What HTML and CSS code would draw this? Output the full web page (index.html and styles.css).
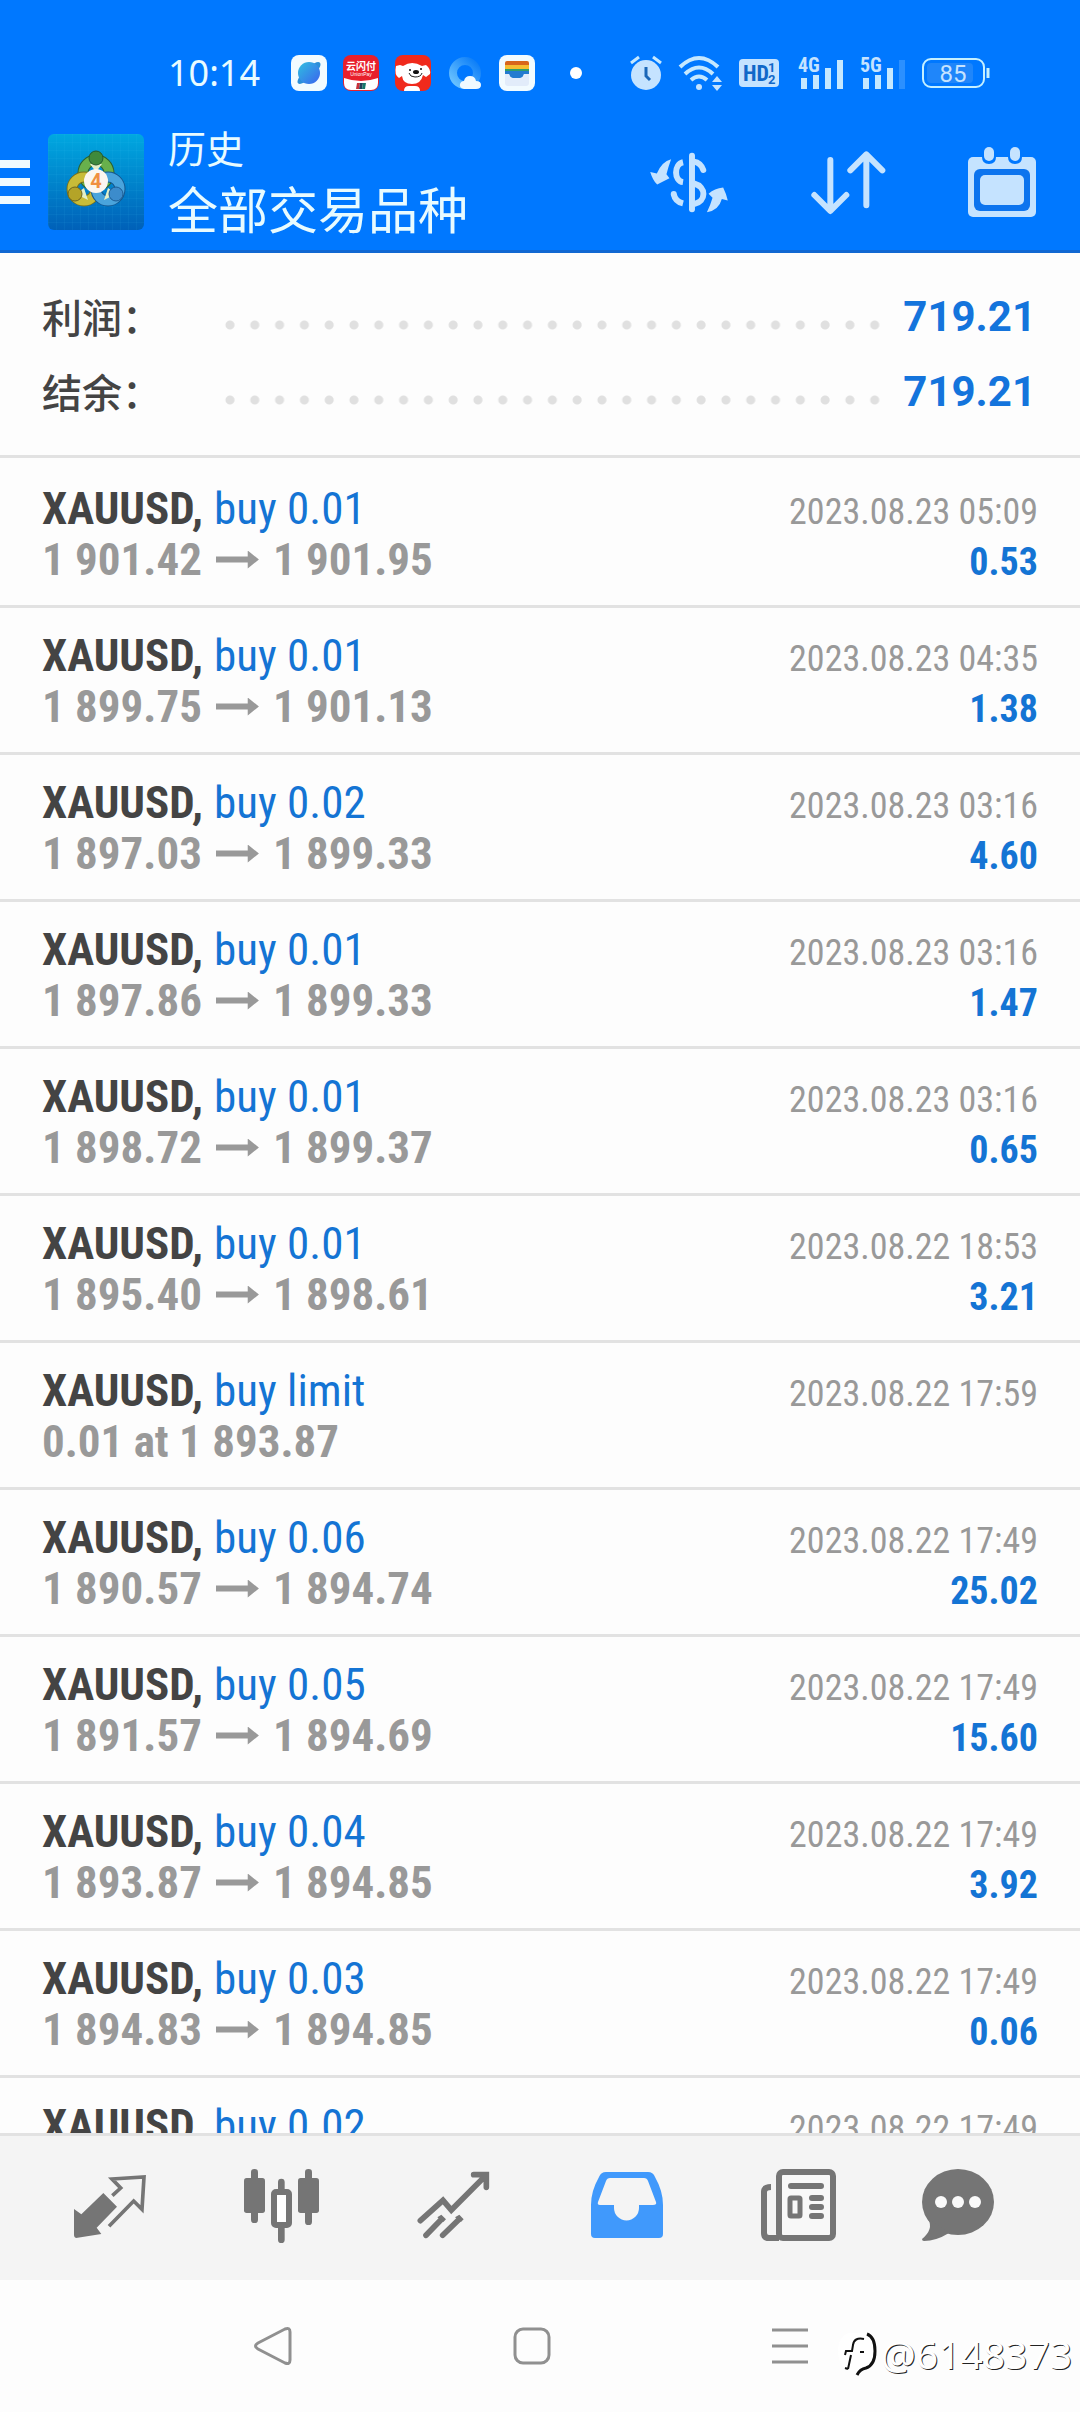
FILE: index.html
```
<!DOCTYPE html>
<html lang="zh-CN">

<head>
    <meta charset="UTF-8">
    <meta name="viewport" content="width=device-width, initial-scale=1.0">
    <title>历史</title>
    <link rel="stylesheet" href="styles.css">
</head>

<body>
    <header class="header">
        <!-- 状态栏 -->
        <div class="status">
            <span class="time">10:14</span>
            <div class="apps">
                <svg viewBox="0 0 36 36">
                    <defs>
                        <linearGradient id="planet" x1="0" y1="0" x2="1" y2="1">
                            <stop offset="0" stop-color="#2fc0e0" />
                            <stop offset="1" stop-color="#3b63ee" />
                        </linearGradient>
                    </defs>
                    <rect width="36" height="36" rx="8" fill="#f2fbff" />
                    <ellipse cx="18" cy="18" rx="15" ry="5" transform="rotate(-43 18 18)" fill="#2b8fd8" />
                    <circle cx="18" cy="18" r="11" fill="url(#planet)" />
                </svg>
                <svg viewBox="0 0 36 36">
                    <rect width="36" height="36" rx="8" fill="#e8202c" />
                    <path d="M1 23q17 6 34 0v5q0 7-7 7H8q-7 0-7-7z" fill="#fff" />
                    <text x="18" y="15" text-anchor="middle" class="pay-cn">云闪付</text>
                    <text x="18" y="21" text-anchor="middle" class="pay-en">UnionPay</text>
                    <path d="M14 28h3l-1 6h-3z" fill="#c8313a" />
                    <path d="M17 28h3l-1 6h-3z" fill="#21405a" />
                    <path d="M20 28h3l-1 6h-3z" fill="#147a6c" />
                </svg>
                <svg viewBox="0 0 36 36">
                    <rect width="36" height="36" rx="8" fill="#f02a1c" />
                    <path d="M8 11q9-6 19 0l4-1q5 4 4 9l-4 3-3-2q-2 9-11 9T7 21l-3 2Q-1 20 1 11l4-1z" fill="#fff" />
                    <path d="M9 36q0-5 5-5h6q5 0 5 5z" fill="#fff" />
                    <path d="M14 18q1 4 6 4 6 0 7-4" fill="none" stroke="#222" />
                    <ellipse cx="21" cy="17" rx="3" ry="2" fill="#111" />
                    <circle cx="15" cy="15" r="1" fill="#111" />
                    <circle cx="26" cy="14" r="1" fill="#111" />
                </svg>
                <svg viewBox="0 0 36 36">
                    <defs>
                        <linearGradient id="ring" x1="1" y1="0" x2="0" y2="1">
                            <stop offset="0" stop-color="#0a7cf8" />
                            <stop offset="1" stop-color="#6cc4ff" />
                        </linearGradient>
                    </defs>
                    <circle cx="18" cy="18" r="12" fill="none" stroke="url(#ring)" stroke-width="8" />
                    <path d="M17 34q-5-1-4-5 1-3 4-3 1-5 6-5t6 5q5 0 5 4t-5 4z" fill="#f0faff" />
                </svg>
                <svg viewBox="0 0 36 36">
                    <rect width="36" height="36" rx="8" fill="#f2fbff" />
                    <path d="M6 8q0-2 2-2h20q2 0 2 2v2H6z" fill="#d8651c" />
                    <path d="M6 10h24v4H6z" fill="#f6bd32" />
                    <path d="M6 14h24v3H6z" fill="#2f9e6c" />
                    <path d="M6 16h24v3h-5q-1 4-4 4h-7q-3 0-4-4H6z" fill="#237bd0" />
                    <path d="M6 19h4q1 4 4 4h7q3 0 4-4h5v9q0 3-3 3H9q-3 0-3-3z" fill="#e2ecfa" />
                </svg>
            </div>
            <i class="dot"></i>
            <div class="system">
                <svg class="alarm" viewBox="0 0 34 36">
                    <circle cx="17" cy="20" r="15" />
                    <path d="M2 8l8-6M32 8l-8-6" class="line3" />
                    <path d="M17 12v9l4 4" fill="none" stroke="#1b67b8" stroke-width="3" />
                </svg>
                <svg class="wifi" viewBox="0 0 44 36">
                    <g fill="none" stroke="#c5e8ff" stroke-width="4">
                        <path d="M1 12q19-18 38 0" />
                        <path d="M6 19q14-13 28 0" />
                        <path d="M12 25q8-7 16 0" />
                    </g>
                    <circle cx="20" cy="32" r="3" />
                    <path d="M33 27l5-6 5 6zM33 30h10l-5 6z" />
                </svg>
                <svg class="hd" viewBox="0 0 40 28">
                    <rect width="40" height="28" rx="4" />
                    <text x="4" y="22" class="hd-big">HD</text>
                    <text x="29" y="13" class="hd-small">1</text>
                    <text x="29" y="25" class="hd-small">2</text>
                </svg>
                <svg class="signal" viewBox="0 0 46 34">
                    <text x="0" y="16" class="net">4G</text>
                    <path d="M6 33V22M18 33V19M30 33V12M42 33V4" class="bar" />
                </svg>
                <svg class="signal" viewBox="0 0 46 34">
                    <text x="0" y="16" class="net">5G</text>
                    <path d="M6 33V22M18 33V19M30 33V12" class="bar" />
                    <path d="M42 33V4" class="bar off" />
                </svg>
                <svg class="battery" viewBox="0 0 68 30">
                    <rect x="1" y="1" width="61" height="28" rx="8" fill="none" stroke="#c5f0ff" stroke-width="2" />
                    <rect x="5" y="5" width="46" height="20" rx="4" fill="#1f86fa" />
                    <path d="M66 10v10" stroke="#c5f0ff" stroke-width="3" />
                    <text x="31" y="24" text-anchor="middle" class="level">85</text>
                </svg>
            </div>
        </div>

        <!-- 标题栏 -->
        <div class="bar-top">
            <button class="menu" aria-label="菜单"><i></i><i></i><i></i></button>
            <svg class="logo" viewBox="0 0 96 96">
                <defs>
                    <linearGradient id="tile" x1="0" y1="0" x2="0" y2="1">
                        <stop offset="0" stop-color="#00a8e0" />
                        <stop offset="1" stop-color="#0060b8" />
                    </linearGradient>
                    <pattern id="mesh" width="8" height="8" patternUnits="userSpaceOnUse">
                        <path d="M8 0H0v8" fill="none" stroke="#3cc8f0" stroke-opacity=".15" />
                    </pattern>
                </defs>
                <rect width="96" height="96" rx="6" fill="url(#tile)" />
                <rect width="96" height="96" rx="6" fill="url(#mesh)" />
                <g fill="none" stroke-width="9">
                    <circle cx="48" cy="39" r="13" stroke="#2c6030" stroke-width="11" />
                    <circle cx="48" cy="39" r="13" stroke="#68b04c" />
                    <circle cx="36" cy="55" r="12" stroke="#76701c" stroke-width="11" />
                    <circle cx="36" cy="55" r="12" stroke="#c8bc38" />
                    <circle cx="60" cy="55" r="12" stroke="#14568e" stroke-width="11" />
                    <circle cx="60" cy="55" r="12" stroke="#4aa4dc" />
                </g>
                <path d="M42 30h12l-6 8zM28 60l8-6 4 12zM68 60l-8-6-4 12z" fill="#e4f0c8" />
                <circle cx="48" cy="24" r="7" fill="#3f8a3c" stroke="#25592c" />
                <circle cx="27" cy="60" r="7" fill="#b4a428" stroke="#6c6420" />
                <circle cx="68" cy="60" r="7" fill="#3c8ccc" stroke="#1c5c94" />
                <circle cx="48" cy="47" r="12" fill="#fbf6f0" />
                <text x="48" y="54" text-anchor="middle" class="four">4</text>
            </svg>
            <div class="titles">
                <p class="sub">历史</p>
                <h1>全部交易品种</h1>
            </div>
            <button class="act" aria-label="交易品种">
                <svg class="sync" viewBox="30 28 240 184">
                    <g fill="none" stroke="#c5e3ff" stroke-width="18">
                        <path d="M132 59c-28 6-28 56 0 60M104 155q4 22 28 28" />
                        <path d="M165 57q20 3 28 25" stroke-linecap="round" />
                        <path d="M165 123c38 10 38 54 0 62" />
                        <path d="M159 39v162" stroke-linecap="round" />
                    </g>
                    <circle cx="104" cy="155" r="9" />
                    <path d="M96 50q-8 22-14 45l9 12-37 19q-13-12-21-38l20 5q15-36 43-43z" />
                    <path d="M204 210q10-20 17-44l-12-12q18-17 44-19 9 18 14 39l-18-4q-9 34-45 40z" />
                </svg>
            </button>
            <button class="act" aria-label="排序">
                <svg class="sort" viewBox="506 26 225 195">
                    <g fill="none" stroke="#c5e3ff" stroke-width="18" stroke-linecap="round" stroke-linejoin="round">
                        <path d="M564 56v152M516 161l48 48 48-48" />
                        <path d="M672 192V40M624 87l48-48 48 48" />
                    </g>
                </svg>
            </button>
            <button class="act" aria-label="日期">
                <svg class="calendar" viewBox="0 0 68 70">
                    <rect y="10" width="68" height="60" rx="5" />
                    <path d="M14 0v10q0 7 7 7t7-7V0zM40 0v10q0 7 7 7t7-7V0z" fill="#0078ff" />
                    <rect x="16" width="10" height="14" rx="5" />
                    <rect x="42" width="10" height="14" rx="5" />
                    <rect x="6" y="22" width="56" height="42" rx="6" fill="#0d74ee" />
                    <rect x="12" y="28" width="44" height="30" rx="5" />
                </svg>
            </button>
        </div>
    </header>

    <main class="main">
        <!-- 汇总 -->
        <dl class="total">
            <div><dt>利润：</dt><dd>719.21</dd></div>
            <div><dt>结余：</dt><dd>719.21</dd></div>
        </dl>

        <!-- 成交记录 -->
        <ul class="list">
            <li>
                <p><b>XAUUSD,</b> <span class="type">buy 0.01</span><time>2023.08.23 05:09</time></p>
                <p class="price">1 901.42 <i class="to"></i> 1 901.95<span class="profit">0.53</span></p>
            </li>
            <li>
                <p><b>XAUUSD,</b> <span class="type">buy 0.01</span><time>2023.08.23 04:35</time></p>
                <p class="price">1 899.75 <i class="to"></i> 1 901.13<span class="profit">1.38</span></p>
            </li>
            <li>
                <p><b>XAUUSD,</b> <span class="type">buy 0.02</span><time>2023.08.23 03:16</time></p>
                <p class="price">1 897.03 <i class="to"></i> 1 899.33<span class="profit">4.60</span></p>
            </li>
            <li>
                <p><b>XAUUSD,</b> <span class="type">buy 0.01</span><time>2023.08.23 03:16</time></p>
                <p class="price">1 897.86 <i class="to"></i> 1 899.33<span class="profit">1.47</span></p>
            </li>
            <li>
                <p><b>XAUUSD,</b> <span class="type">buy 0.01</span><time>2023.08.23 03:16</time></p>
                <p class="price">1 898.72 <i class="to"></i> 1 899.37<span class="profit">0.65</span></p>
            </li>
            <li>
                <p><b>XAUUSD,</b> <span class="type">buy 0.01</span><time>2023.08.22 18:53</time></p>
                <p class="price">1 895.40 <i class="to"></i> 1 898.61<span class="profit">3.21</span></p>
            </li>
            <li>
                <p><b>XAUUSD,</b> <span class="type">buy limit</span><time>2023.08.22 17:59</time></p>
                <p class="price">0.01 at 1 893.87</p>
            </li>
            <li>
                <p><b>XAUUSD,</b> <span class="type">buy 0.06</span><time>2023.08.22 17:49</time></p>
                <p class="price">1 890.57 <i class="to"></i> 1 894.74<span class="profit">25.02</span></p>
            </li>
            <li>
                <p><b>XAUUSD,</b> <span class="type">buy 0.05</span><time>2023.08.22 17:49</time></p>
                <p class="price">1 891.57 <i class="to"></i> 1 894.69<span class="profit">15.60</span></p>
            </li>
            <li>
                <p><b>XAUUSD,</b> <span class="type">buy 0.04</span><time>2023.08.22 17:49</time></p>
                <p class="price">1 893.87 <i class="to"></i> 1 894.85<span class="profit">3.92</span></p>
            </li>
            <li>
                <p><b>XAUUSD,</b> <span class="type">buy 0.03</span><time>2023.08.22 17:49</time></p>
                <p class="price">1 894.83 <i class="to"></i> 1 894.85<span class="profit">0.06</span></p>
            </li>
            <li>
                <p><b>XAUUSD,</b> <span class="type">buy 0.02</span><time>2023.08.22 17:49</time></p>
            </li>
        </ul>
    </main>

    <!-- 底部导航 -->
    <nav class="tabs">
        <button aria-label="行情">
            <svg viewBox="30 15 240 240">
                <path d="M130 99l41 41-61 63 14 19-76 12q-6-1-6-8v-79l22 16z" stroke-linejoin="round" />
                <path d="M157 107l25-23-26-27 96-6-6 97-25-25-74 76" fill="none" stroke="#757575" stroke-width="11" />
            </svg>
        </button>
        <button aria-label="图表">
            <svg viewBox="546 15 240 240">
                <rect x="552" y="54" width="63" height="105" rx="8" />
                <rect x="573" y="27" width="21" height="162" rx="10" />
                <rect x="714" y="54" width="63" height="105" rx="8" />
                <rect x="735" y="27" width="21" height="168" rx="10" />
                <path d="M664 66v30M664 200v39" stroke="#757575" stroke-width="20" stroke-linecap="round" />
                <rect x="642" y="96" width="45" height="99" rx="6" fill="#fff" stroke="#757575" stroke-width="18" />
            </svg>
        </button>
        <button aria-label="交易">
            <svg viewBox="1062 15 240 240">
                <g fill="none" stroke="#757575" stroke-width="17" stroke-linecap="round">
                    <path d="M1081 182l68-61 25 29 104-104M1241 44h38v38" />
                    <path d="M1098 226l45-47M1148 226l48-47" />
                </g>
                <path d="M1144 164l14 14-8 8-18-14zM1198 164l13 14-8 8-18-14z" />
            </svg>
        </button>
        <button class="on" aria-label="历史">
            <svg viewBox="0 0 80 80">
                <path fill-rule="evenodd" d="M20 7h42q5 0 7 5 8 14 8 28v29q0 4-4 4H9q-4 0-4-4V40q0-14 8-28 2-5 7-5zM24 13q-3 0-4 3l-8 21q-1 3 2 3h14v3a12 12 0 0 0 25 0v-3h14q4 0 3-3l-8-21q-1-3-4-3z" />
            </svg>
        </button>
        <button aria-label="新闻">
            <svg viewBox="0 0 80 80">
                <rect x="21" y="7" width="54" height="66" rx="4" fill="#f8f8f8" stroke="#757575" stroke-width="6" />
                <path d="M13 22q-7 0-7 5v41q0 5 5 5h10" fill="none" stroke="#757575" stroke-width="6" />
                <path d="M33 21h30M54 33h9M54 42h9M54 51h9" stroke="#757575" stroke-width="6" stroke-linecap="round" />
                <rect x="32" y="33" width="10" height="18" rx="1" fill="#f8f8f8" stroke="#757575" stroke-width="5" />
            </svg>
        </button>
        <button aria-label="聊天">
            <svg viewBox="8 0 80 80">
                <ellipse cx="36" cy="37" rx="36" ry="33" />
                <path d="M6 54q6 10-6 20 0 2 2 2 12 0 25-8z" />
                <g fill="#fafafa">
                    <circle cx="19" cy="37" r="6" />
                    <circle cx="36" cy="37" r="6" />
                    <circle cx="53" cy="37" r="6" />
                </g>
            </svg>
        </button>
    </nav>

    <div class="system-nav">
        <button aria-label="返回">
            <svg viewBox="0 0 40 40">
                <path d="M4 17L31 3q5-2 5 3v28q0 5-5 3L4 23q-5-3 0-6z" />
            </svg>
        </button>
        <button aria-label="主页">
            <svg viewBox="0 0 40 40">
                <rect x="3" y="3" width="34" height="34" rx="8" />
            </svg>
        </button>
        <button aria-label="最近任务">
            <svg viewBox="0 0 40 40">
                <path d="M2 4h36M2 20h36M2 36h36" />
            </svg>
        </button>
        <div class="mark">
            <svg viewBox="0 0 40 44">
                <path d="M12 1h14q13 2 13 18 0 14-11 17l-9 7v-5Q2 40 1 20 1 4 12 1z" fill="#fff" />
                <path d="M30 2q8 3 8 17 0 14-9 17-6 1-9 7" fill="none" stroke="#111" stroke-width="3" />
                <path d="M27 7q-10-2-11 6l-1 6H9l-1 4M14 23l-3 14M8 36l3 1M23 20h4" fill="none" stroke="#111" stroke-width="2" />
            </svg>
            <span>@6148373</span>
        </div>
    </div>
</body>

</html>
```
FILE: styles.css
```
* {
    margin: 0;
    padding: 0;
    box-sizing: border-box;
    list-style: none;
}

html,
body {
    width: 100%;
    height: 100%;
}

body {
    display: flex;
    flex-direction: column;
    background: #fdfdfd;
    font-family: "Roboto Condensed", Roboto, "Noto Sans CJK SC", sans-serif;
}

button {
    border: none;
    background: none;
    font: inherit;
}

svg {
    display: block;
    overflow: visible;
}

/* 顶部 */
.header {
    flex-shrink: 0;
    background: #0078ff;
    border-bottom: solid 3px #1168d2;
    fill: #c5e3ff;
}

.status {
    display: flex;
    align-items: center;
    height: 110px;
    padding: 36px 90px 0 168px;
}

.time {
    color: #e8fbff;
    font: 36px/40px "Noto Sans", sans-serif;
}

.apps {
    display: flex;
    gap: 16px;
    margin-left: 31px;
}

.apps svg {
    width: 36px;
    height: 36px;
}

.pay-cn {
    font: bold 10px "Noto Sans CJK SC", sans-serif;
    fill: #fff;
}

.pay-en {
    font: 5px "Liberation Sans", sans-serif;
    fill: #fff;
}

.dot {
    width: 12px;
    height: 12px;
    margin-left: 35px;
    border-radius: 50%;
    background: #fff;
}

.system {
    flex: 1;
    display: flex;
    align-items: center;
    justify-content: flex-end;
    gap: 16px;
}

.alarm {
    width: 34px;
    height: 36px;
}

.line3 {
    stroke: #c5e8ff;
    stroke-width: 3;
}

.wifi {
    width: 44px;
    height: 36px;
}

.hd {
    width: 40px;
    height: 28px;
    margin-right: 3px;
}

.hd-big {
    font: bold 22px "Roboto Condensed", sans-serif;
    fill: #1268c8;
}

.hd-small {
    font: bold 13px Roboto, sans-serif;
    fill: #1268c8;
}

.signal {
    width: 46px;
    height: 34px;
}

.net {
    font: bold 20px "Roboto Condensed", sans-serif;
}

.bar {
    stroke: #c5e8ff;
    stroke-width: 6;
}

.off {
    stroke: #2b90ff;
}

.battery {
    width: 68px;
    height: 30px;
}

.level {
    font: 24px Roboto, sans-serif;
}

.bar-top {
    display: flex;
    align-items: center;
    height: 140px;
    padding: 4px 44px 0 0;
}

.menu {
    display: flex;
    flex-direction: column;
    gap: 10px;
    width: 30px;
}

.menu i {
    height: 8px;
    background: #f0fbff;
}

.logo {
    width: 96px;
    height: 96px;
    margin-left: 18px;
}

.four {
    font: bold 20px Roboto, sans-serif;
    fill: #f09040;
}

.titles {
    flex: 1;
    margin-left: 24px;
    padding-bottom: 6px;
    color: #e8fbff;
    font-family: "Noto Sans CJK SC", sans-serif;
}

.sub {
    font-size: 38px;
    line-height: 56px;
}

h1 {
    font-size: 50px;
    font-weight: normal;
    line-height: 64px;
}

.act {
    margin-left: 82px;
    fill: #c5e3ff;
}

.sync {
    width: 80px;
    height: 61px;
}

.sort {
    width: 75px;
    height: 65px;
}

.calendar {
    width: 68px;
    height: 70px;
}

/* 中间内容 */
.main {
    flex: 1;
    min-height: 0;
    overflow: hidden;
}

.total {
    padding: 26px 44px 26px 42px;
    border-bottom: solid 3px #e2e2e2;
}

.total div {
    display: flex;
    align-items: center;
    height: 75px;
}

dt {
    width: 176px;
    color: #444;
    font: 500 40px/75px "Noto Sans CJK SC", sans-serif;
}

dd {
    flex: 1;
    display: flex;
    gap: 16px;
    color: #1474dc;
    font: bold 42px/76px Roboto, sans-serif;
}

dd::before {
    content: "";
    flex: 1;
    background: radial-gradient(circle at 12px 46px, #e0e0e0 4px, transparent 5px) 0 0 / 24px 75px round no-repeat;
    background-repeat: space no-repeat;
}

.list {
    padding-top: 3px;
}

.list li {
    height: 147px;
    padding: 22px 42px 0;
    border-bottom: solid 3px #e2e2e2;
}

.list p {
    display: flex;
    align-items: baseline;
    gap: 11px;
    color: #444;
    font-size: 45px;
    line-height: 51px;
}

.list .type {
    color: #1474d4;
}

.list time {
    margin-left: auto;
    color: #999;
    font-size: 36px;
    line-height: 40px;
}

.list .price {
    gap: 14px;
    color: #999;
    font-weight: bold;
}

.list .profit {
    margin-left: auto;
    color: #1474d4;
    font-size: 38px;
    line-height: 40px;
}

/* 箭头 */
.to {
    align-self: center;
    width: 43px;
    height: 18px;
    background: #999;
    clip-path: polygon(0 33%, 74% 33%, 74% 0, 100% 50%, 74% 100%, 74% 67%, 0 67%);
}

/* 底部 */
.tabs {
    flex-shrink: 0;
    display: flex;
    height: 147px;
    padding: 0 24px 6px;
    border-top: solid 3px #e2e2e2;
    background: #f4f4f4;
}

.tabs button {
    flex: 1;
    display: flex;
    align-items: center;
    justify-content: center;
    fill: #757575;
}

.tabs svg {
    width: 80px;
    height: 80px;
}

.tabs .on {
    fill: #4099fc;
}

.system-nav {
    position: relative;
    flex-shrink: 0;
    display: flex;
    justify-content: center;
    gap: 218px;
    height: 132px;
    padding: 46px 16px 0 0;
}

.system-nav button {
    height: 40px;
}

.system-nav button svg {
    width: 40px;
    height: 40px;
    fill: none;
    stroke: #909090;
    stroke-width: 3;
}

/* 水印 */
.mark {
    position: absolute;
    right: 8px;
    bottom: 34px;
    display: flex;
    align-items: center;
    gap: 4px;
    color: #fff;
    font: 39px/48px "Noto Sans", sans-serif;
    text-shadow: 1px 1px 0 #222;
}

.mark svg {
    width: 40px;
    height: 44px;
}
```
